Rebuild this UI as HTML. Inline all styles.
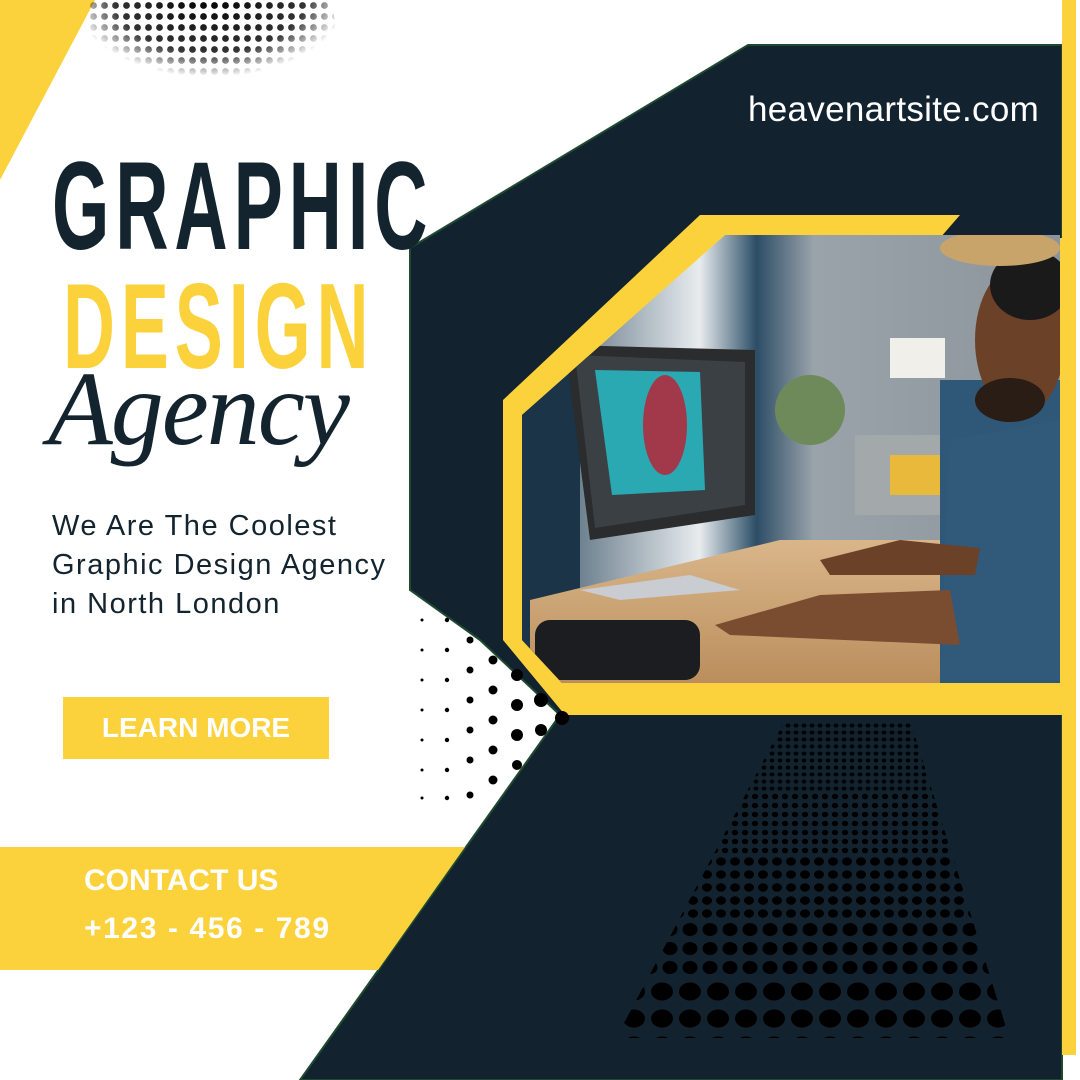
<!DOCTYPE html>
<html><head><meta charset="utf-8"><style>
*{margin:0;padding:0;box-sizing:border-box}
body{width:1080px;height:1080px;overflow:hidden;background:#fff;position:relative;font-family:"Liberation Sans",sans-serif}
.a{position:absolute}
.big{font-weight:bold;transform-origin:0 0;transform:scaleX(0.59);letter-spacing:10px;white-space:nowrap;line-height:1}
</style></head><body>
<svg class="a" style="left:0;top:0" width="1080" height="1080" viewBox="0 0 1080 1080">
<defs>
<pattern id="d1" width="11" height="11" patternUnits="userSpaceOnUse"><circle cx="5.5" cy="5.5" r="3.4" fill="#000"/></pattern>
<radialGradient id="rg" cx="0.5" cy="0.3" r="0.55"><stop offset="0" stop-color="#fff"/><stop offset="0.7" stop-color="#fff" stop-opacity="0.8"/><stop offset="1" stop-color="#fff" stop-opacity="0"/></radialGradient>
<mask id="m1"><ellipse cx="210" cy="25" rx="125" ry="75" fill="url(#rg)"/></mask>
<linearGradient id="room" x1="0" y1="0" x2="1" y2="0"><stop offset="0" stop-color="#1d3a4f"/><stop offset="0.35" stop-color="#e8ecef"/><stop offset="0.45" stop-color="#2c4d66"/><stop offset="0.55" stop-color="#9aa3aa"/><stop offset="1" stop-color="#8b949b"/></linearGradient>
<linearGradient id="desk" x1="0" y1="0" x2="0" y2="1"><stop offset="0" stop-color="#d9b68a"/><stop offset="1" stop-color="#b98c5a"/></linearGradient>
</defs>
<polygon points="0,0 95,0 0,180" fill="#fcd23c"/>
<rect x="80" y="0" width="260" height="100" fill="url(#d1)" mask="url(#m1)"/>
<polygon points="748,45 1062,45 1062,1080 300,1080 560,715 480,640 410,590 410,248" fill="#12232f" stroke="#1f4a30" stroke-width="2"/>
<polygon points="0,847 465,847 378,970 0,970" fill="#fcd23c"/>
<polygon points="700,215 960,215 940,238 1062,238 1062,715 565,715 503,640 503,400" fill="#fcd23c"/>
<clipPath id="pc"><polygon points="725,235 1060,235 1060,683 562,683 522,640 522,415"/></clipPath>
<g clip-path="url(#pc)">
<rect x="500" y="230" width="570" height="460" fill="url(#room)"/>
<rect x="520" y="230" width="60" height="460" fill="#1b3447"/>
<rect x="855" y="435" width="170" height="80" fill="#a3a8ab"/>
<rect x="890" y="455" width="70" height="40" fill="#e8b93a"/>
<rect x="890" y="338" width="55" height="40" fill="#f1efe9"/>
<circle cx="810" cy="410" r="35" fill="#6f8a5a"/>
<polygon points="565,345 755,350 755,515 590,540" fill="#2a2c2e"/>
<polygon points="575,355 745,362 745,505 595,528" fill="#3b4045"/>
<polygon points="595,370 700,372 705,490 612,495" fill="#2aa9b3"/>
<ellipse cx="665" cy="425" rx="22" ry="50" fill="#a2394a"/>
<polygon points="530,600 780,540 1060,540 1060,690 530,690" fill="url(#desk)"/>
<polygon points="580,590 690,575 740,590 620,600" fill="#c9ccd0"/>
<rect x="535" y="620" width="165" height="60" rx="15" fill="#1c1d20"/>
<rect x="940" y="380" width="120" height="310" fill="#2f5878"/>
<polygon points="950,440 1060,420 1060,680 940,680" fill="#31597a"/>
<polygon points="715,625 820,595 950,590 960,645 730,635" fill="#7a4d31"/>
<polygon points="820,560 900,540 980,548 975,575 830,575" fill="#6b4128"/>
<ellipse cx="1020" cy="340" rx="45" ry="75" fill="#6b4128"/>
<ellipse cx="1030" cy="285" rx="40" ry="35" fill="#1a1a1a"/>
<ellipse cx="1010" cy="400" rx="35" ry="22" fill="#2a1d15"/>
<ellipse cx="1000" cy="248" rx="60" ry="18" fill="#c9a46a"/>
</g>
<rect x="1062" y="0" width="14" height="1055" fill="#fcd23c"/>
</svg>
<svg class="a" style="left:0;top:0" width="1080" height="1080">
<defs>
<pattern id="pp1" x="0" y="722" width="8" height="7" patternUnits="userSpaceOnUse"><ellipse cx="4" cy="3.5" rx="2.4" ry="2" fill="#000"/></pattern>
<pattern id="pp2" x="0" y="792" width="10" height="9" patternUnits="userSpaceOnUse"><ellipse cx="5" cy="4.5" rx="3.2" ry="2.8" fill="#000"/></pattern>
<pattern id="pp3" x="0" y="855" width="14" height="13" patternUnits="userSpaceOnUse"><ellipse cx="7" cy="6.5" rx="5" ry="4.3" fill="#000"/></pattern>
<pattern id="pp4" x="0" y="920" width="20" height="19" patternUnits="userSpaceOnUse"><ellipse cx="10" cy="9.5" rx="7.5" ry="6.5" fill="#000"/></pattern>
<pattern id="pp5" x="620" y="978" width="28" height="27" patternUnits="userSpaceOnUse"><ellipse cx="14" cy="13.5" rx="11" ry="9" fill="#000"/></pattern>
<clipPath id="tz"><polygon points="785,720 910,720 1010,1040 615,1040"/></clipPath>
</defs>
<g fill="#000">
 <circle cx="422" cy="620" r="1.5"/><circle cx="422" cy="650" r="1.5"/><circle cx="422" cy="680" r="1.5"/><circle cx="422" cy="710" r="1.5"/><circle cx="422" cy="740" r="1.5"/><circle cx="422" cy="770" r="1.5"/><circle cx="422" cy="798" r="1.5"/>
 <circle cx="447" cy="620" r="2.2"/><circle cx="447" cy="650" r="2.2"/><circle cx="447" cy="680" r="2.2"/><circle cx="447" cy="710" r="2.2"/><circle cx="447" cy="740" r="2.2"/><circle cx="447" cy="770" r="2.2"/><circle cx="447" cy="798" r="2.2"/>
 <circle cx="470" cy="640" r="3.5"/><circle cx="470" cy="670" r="3.5"/><circle cx="470" cy="700" r="3.5"/><circle cx="470" cy="730" r="3.5"/><circle cx="470" cy="760" r="3.5"/><circle cx="470" cy="795" r="3.5"/>
 <circle cx="493" cy="660" r="4.5"/><circle cx="493" cy="690" r="4.5"/><circle cx="493" cy="720" r="4.5"/><circle cx="493" cy="750" r="4.5"/><circle cx="493" cy="780" r="4.5"/>
 <circle cx="517" cy="675" r="6"/><circle cx="517" cy="705" r="6"/><circle cx="517" cy="735" r="6"/><circle cx="517" cy="765" r="5"/>
 <circle cx="541" cy="700" r="7"/><circle cx="541" cy="730" r="6"/>
 <circle cx="562" cy="718" r="7"/>
</g>
<g clip-path="url(#tz)">
 <rect x="600" y="722" width="420" height="70" fill="url(#pp1)"/>
 <rect x="600" y="792" width="420" height="63" fill="url(#pp2)"/>
 <rect x="600" y="855" width="420" height="65" fill="url(#pp3)"/>
 <rect x="600" y="920" width="420" height="58" fill="url(#pp4)"/>
 <rect x="600" y="978" width="420" height="60" fill="url(#pp5)"/>
</g>
</svg>
<div class="a" style="left:748px;top:90px;color:#fff;font-size:35px;letter-spacing:0.3px">heavenartsite.com</div>
<div class="a big" style="left:52px;top:144px;font-size:125px;color:#13242f">GRAPHIC</div>
<div class="a big" style="left:63px;top:265px;font-size:122px;color:#fcd23c">DESIGN</div>
<div class="a" style="left:48px;top:348px;font-family:'Liberation Serif',serif;font-style:italic;font-size:106px;color:#13242f;letter-spacing:-2px">Agency</div>
<div class="a" style="left:52px;top:507px;font-size:29px;line-height:39px;color:#13242f;letter-spacing:1.5px">We Are The Coolest<br>Graphic Design Agency<br>in North London</div>
<div class="a" style="left:63px;top:697px;width:266px;height:62px;background:#fcd23c;color:#fff;font-weight:bold;font-size:28px;line-height:62px;text-align:center">LEARN MORE</div>
<div class="a" style="left:84px;top:864px;color:#fff;font-weight:bold;font-size:30px">CONTACT US</div>
<div class="a" style="left:84px;top:912px;color:#fff;font-weight:bold;font-size:30px;letter-spacing:1.6px">+123 - 456 - 789</div>
</body></html>
